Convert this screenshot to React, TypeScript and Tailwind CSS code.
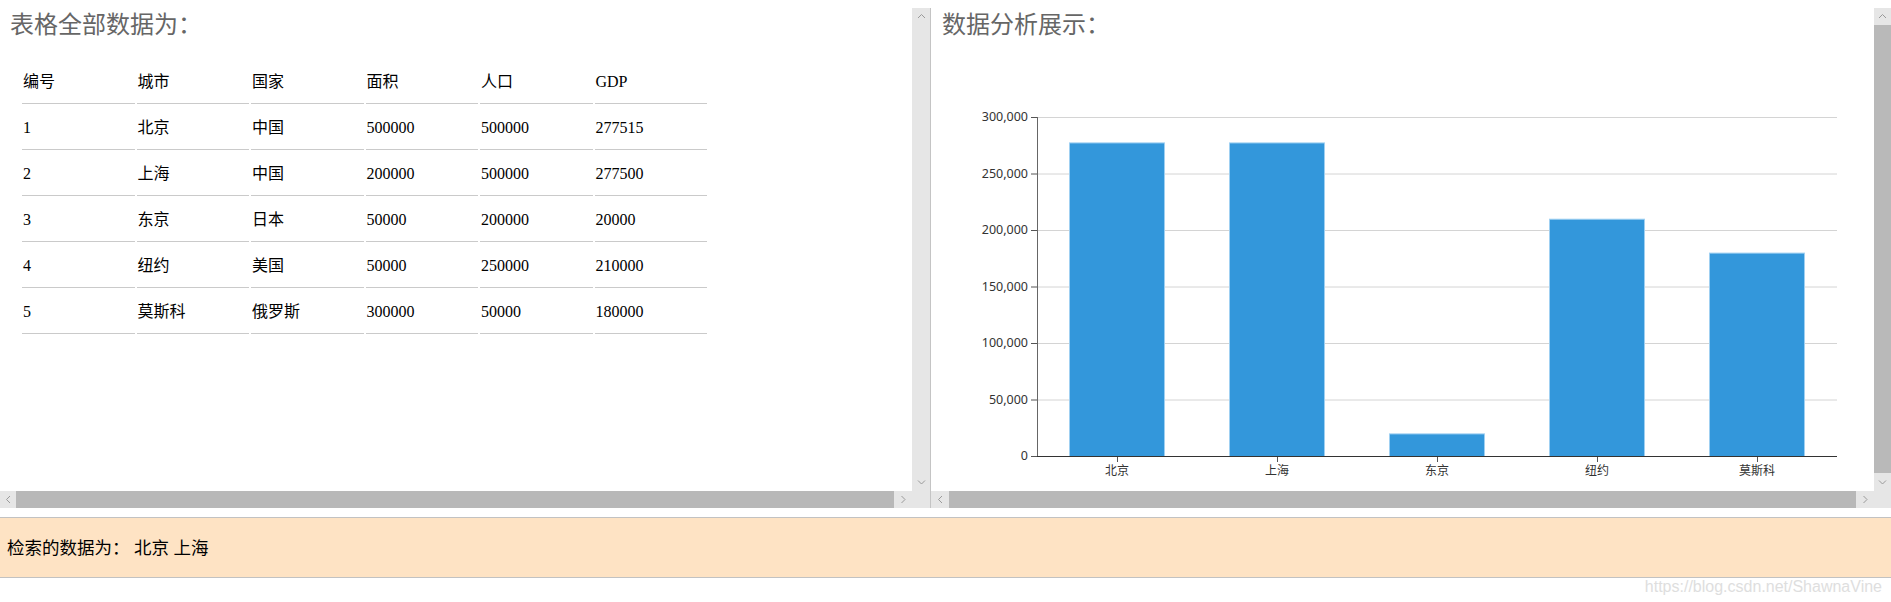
import React from "react";

const sans = { fontFamily: '"Noto Sans", "Noto Sans CJK SC", sans-serif' };

const tableRows = [
  ["编号", "城市", "国家", "面积", "人口", "GDP"],
  ["1", "北京", "中国", "500000", "500000", "277515"],
  ["2", "上海", "中国", "200000", "500000", "277500"],
  ["3", "东京", "日本", "50000", "200000", "20000"],
  ["4", "纽约", "美国", "50000", "250000", "210000"],
  ["5", "莫斯科", "俄罗斯", "300000", "50000", "180000"],
];

const gdp = [
  { name: "北京", value: 277515 },
  { name: "上海", value: 277500 },
  { name: "东京", value: 20000 },
  { name: "纽约", value: 210000 },
  { name: "莫斯科", value: 180000 },
];

type Dir = "up" | "down" | "left" | "right";

const Chevron = ({ dir }: { dir: Dir }) => {
  const paths: Record<Dir, string> = {
    up: "M1 5 L4.5 1.5 L8 5",
    down: "M1 1.5 L4.5 5 L8 1.5",
    left: "M5 1 L1.5 4.5 L5 8",
    right: "M1.5 1 L5 4.5 L1.5 8",
  };
  const horiz = dir === "up" || dir === "down";
  return (
    <svg
      width={horiz ? 9 : 7}
      height={horiz ? 7 : 9}
      viewBox={horiz ? "0 0 9 7" : "0 0 7 9"}
      fill="none"
    >
      <path d={paths[dir]} stroke="#9a9a9a" strokeWidth="1" />
    </svg>
  );
};

const VScroll = ({ thumb, width }: { thumb: boolean; width: string }) => (
  <div className={`${width} h-full flex flex-col bg-[#e6e6e6]`}>
    <div className="h-[17px] flex items-center justify-center">
      <Chevron dir="up" />
    </div>
    <div className={`flex-1 ${thumb ? "bg-[#b9b9b9]" : ""}`} />
    <div className="h-[18px] flex items-center justify-center">
      <Chevron dir="down" />
    </div>
  </div>
);

const HScroll = ({ leftW }: { leftW: string }) => (
  <div className="flex-1 h-full flex bg-[#e6e6e6]">
    <div className={`${leftW} flex items-center justify-center`}>
      <Chevron dir="left" />
    </div>
    <div className="flex-1 bg-[#b8b8b8]" />
    <div className="w-[18px] flex items-center justify-center">
      <Chevron dir="right" />
    </div>
  </div>
);

const BarChart = () => {
  const x0 = 106;
  const x1 = 906;
  const yZero = 416;
  const yTop = 77;
  const max = 300000;
  const sy = (v: number) => yZero - ((yZero - yTop) * v) / max;
  const band = (x1 - x0) / gdp.length;
  const ticks = [0, 50000, 100000, 150000, 200000, 250000, 300000];

  return (
    <svg width="943" height="451" style={sans}>
      {ticks.map((t) => (
        <g key={t}>
          {t > 0 && (
            <line x1={x0} x2={x1} y1={sy(t) + 0.5} y2={sy(t) + 0.5} stroke="#d4d4d4" />
          )}
          <line x1={x0 - 6} x2={x0} y1={sy(t) + 0.5} y2={sy(t) + 0.5} stroke="#555" />
          <text
            x={97}
            y={sy(t) + 1}
            textAnchor="end"
            dominantBaseline="middle"
            fontSize="12.5"
            fill="#333"
          >
            {t.toLocaleString("en-US")}
          </text>
        </g>
      ))}
      {gdp.map((d, i) => {
        const cx = x0 + band * i + band / 2;
        return (
          <g key={d.name}>
            <rect
              x={cx - 48 + 0.5}
              y={sy(d.value) + 0.5}
              width={95}
              height={yZero - sy(d.value)}
              fill="#3397db"
              stroke="#9fd0f2"
              strokeWidth="1"
            />
            <line x1={cx + 0.5} x2={cx + 0.5} y1={yZero} y2={yZero + 6} stroke="#555" />
            <text
              x={cx}
              y={yZero + 16}
              textAnchor="middle"
              dominantBaseline="middle"
              fontSize="12"
              fill="#333"
            >
              {d.name}
            </text>
          </g>
        );
      })}
      <line x1={x0 + 0.5} x2={x0 + 0.5} y1={yTop} y2={yZero + 1} stroke="#666" />
      <line x1={x0} x2={x1} y1={yZero + 0.5} y2={yZero + 0.5} stroke="#333" />
    </svg>
  );
};

export default function App() {
  return (
    <div className="w-[1891px] h-[602px] bg-white overflow-hidden" style={sans}>
      <div className="h-2" />
      <div className="flex h-[500px]">
        {/* left panel: table */}
        <div className="w-[931px] flex flex-col border-r border-[#c4c4c4]">
          <div className="flex h-[483px]">
            <div className="w-[912px] h-full bg-white">
              <div className="pl-[10px] h-[32px] leading-[32px] text-[24px] text-[#666]">
                表格全部数据为：
              </div>
              <table
                className="ml-[20px] mt-[18px] border-separate border-spacing-[2px] table-fixed text-[16px] text-black"
                style={{ fontFamily: '"Liberation Serif", "Noto Sans CJK SC", serif' }}
              >
                <tbody>
                  {tableRows.map((row, r) => (
                    <tr key={r}>
                      {row.map((cell, c) => (
                        <td
                          key={c}
                          className="w-[112.5px] h-[44px] px-[1px] align-middle border-b border-[#cacaca] font-normal"
                        >
                          {cell}
                        </td>
                      ))}
                    </tr>
                  ))}
                </tbody>
              </table>
            </div>
            <VScroll thumb={false} width="w-[18px]" />
          </div>
          <div className="flex h-[17px]">
            <HScroll leftW="w-[16px]" />
            <div className="w-[18px] bg-[#e6e6e6]" />
          </div>
        </div>

        {/* right panel: chart */}
        <div className="w-[960px] flex flex-col">
          <div className="flex h-[483px]">
            <div className="w-[943px] h-full bg-white flex flex-col">
              <div className="pl-[11px] h-[32px] leading-[32px] text-[24px] text-[#666]">
                数据分析展示：
              </div>
              <BarChart />
            </div>
            <VScroll thumb width="w-[17px]" />
          </div>
          <div className="flex h-[17px]">
            <HScroll leftW="w-[18px]" />
            <div className="w-[17px] bg-[#e6e6e6]" />
          </div>
        </div>
      </div>

      <div className="h-[9px]" />
      <div className="h-[61px] bg-[#fee3c4] border-y border-[#c2c2c2] flex items-center pl-[7px] text-[17.5px] text-black">
        检索的数据为：&nbsp;北京 上海
      </div>
      <div className="flex justify-end pr-[9px] pt-[1px]">
        <span
          className="text-[16px] leading-[16px] text-[#dedede]"
          style={{ fontFamily: '"Liberation Sans", Arial, sans-serif' }}
        >
          https://blog.csdn.net/ShawnaVine
        </span>
      </div>
    </div>
  );
}
